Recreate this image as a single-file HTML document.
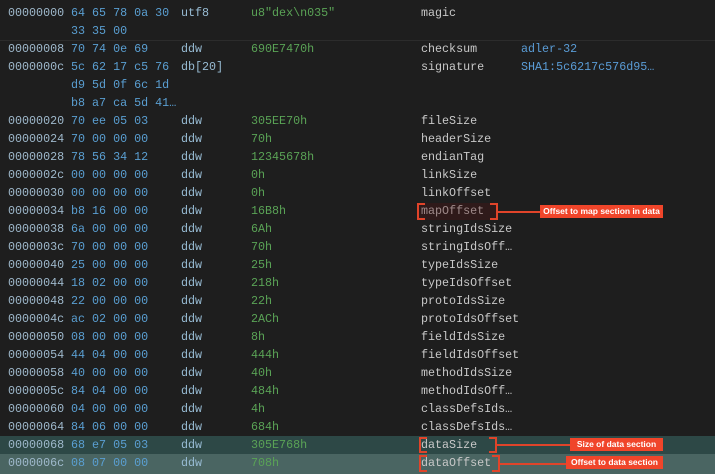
<!DOCTYPE html>
<html><head><style>
body{margin:0;background:#1e1e1e;width:715px;height:474px;overflow:hidden;position:relative;font-family:"Liberation Mono",monospace;font-size:11.7px}
.r{position:absolute;left:0;width:715px;height:18px;line-height:18px;white-space:pre}
.r span{position:absolute;top:0}
.o{left:8px;color:#9fb9cc}
.h{left:71px;color:#5a9fd2}
.t{left:181px;color:#98bcd4}
.v{left:251px;color:#5aa356}
.n{left:421px;color:#c8c8c8}
.c{left:521px;color:#5a9cd6}
.sep{position:absolute;left:0;top:40px;width:715px;height:1px;background:#2c2c2c}
.box{position:absolute;border:2px solid #e0442a;border-top:none;border-bottom:none}
.box:before,.box:after{content:"";position:absolute;left:0;right:0;height:2px;background:linear-gradient(90deg,#e0442a 6px,transparent 6px,transparent calc(100% - 6px),#e0442a calc(100% - 6px))}
.box:before{top:0}.box:after{bottom:0}
.ln{position:absolute;height:2px;background:#e0442a}
.lb{position:absolute;background:#f0452a;color:#fff;font-family:"Liberation Sans",sans-serif;font-weight:bold;font-size:8.5px;text-align:center;line-height:13px;height:13px}
</style></head><body>
<div class="r" style="top:4px"><span class="o">00000000</span><span class="h">64 65 78 0a 30</span><span class="t">utf8</span><span class="v">u8"dex\n035"</span><span class="n">magic</span></div>
<div class="r" style="top:22px"><span class="h">33 35 00</span></div>
<div class="sep"></div>
<div class="r" style="top:40px"><span class="o">00000008</span><span class="h">70 74 0e 69</span><span class="t">ddw</span><span class="v">690E7470h</span><span class="n">checksum</span><span class="c">adler-32</span></div>
<div class="r" style="top:58px"><span class="o">0000000c</span><span class="h">5c 62 17 c5 76</span><span class="t">db[20]</span><span class="n">signature</span><span class="c">SHA1:5c6217c576d95…</span></div>
<div class="r" style="top:76px"><span class="h">d9 5d 0f 6c 1d</span></div>
<div class="r" style="top:94px"><span class="h">b8 a7 ca 5d 41…</span></div>
<div class="r" style="top:112px"><span class="o">00000020</span><span class="h">70 ee 05 03</span><span class="t">ddw</span><span class="v">305EE70h</span><span class="n">fileSize</span></div>
<div class="r" style="top:130px"><span class="o">00000024</span><span class="h">70 00 00 00</span><span class="t">ddw</span><span class="v">70h</span><span class="n">headerSize</span></div>
<div class="r" style="top:148px"><span class="o">00000028</span><span class="h">78 56 34 12</span><span class="t">ddw</span><span class="v">12345678h</span><span class="n">endianTag</span></div>
<div class="r" style="top:166px"><span class="o">0000002c</span><span class="h">00 00 00 00</span><span class="t">ddw</span><span class="v">0h</span><span class="n">linkSize</span></div>
<div class="r" style="top:184px"><span class="o">00000030</span><span class="h">00 00 00 00</span><span class="t">ddw</span><span class="v">0h</span><span class="n">linkOffset</span></div>
<div class="r" style="top:202px"><span class="o">00000034</span><span class="h">b8 16 00 00</span><span class="t">ddw</span><span class="v">16B8h</span><span class="n">mapOffset</span></div>
<div class="r" style="top:220px"><span class="o">00000038</span><span class="h">6a 00 00 00</span><span class="t">ddw</span><span class="v">6Ah</span><span class="n">stringIdsSize</span></div>
<div class="r" style="top:238px"><span class="o">0000003c</span><span class="h">70 00 00 00</span><span class="t">ddw</span><span class="v">70h</span><span class="n">stringIdsOff…</span></div>
<div class="r" style="top:256px"><span class="o">00000040</span><span class="h">25 00 00 00</span><span class="t">ddw</span><span class="v">25h</span><span class="n">typeIdsSize</span></div>
<div class="r" style="top:274px"><span class="o">00000044</span><span class="h">18 02 00 00</span><span class="t">ddw</span><span class="v">218h</span><span class="n">typeIdsOffset</span></div>
<div class="r" style="top:292px"><span class="o">00000048</span><span class="h">22 00 00 00</span><span class="t">ddw</span><span class="v">22h</span><span class="n">protoIdsSize</span></div>
<div class="r" style="top:310px"><span class="o">0000004c</span><span class="h">ac 02 00 00</span><span class="t">ddw</span><span class="v">2ACh</span><span class="n">protoIdsOffset</span></div>
<div class="r" style="top:328px"><span class="o">00000050</span><span class="h">08 00 00 00</span><span class="t">ddw</span><span class="v">8h</span><span class="n">fieldIdsSize</span></div>
<div class="r" style="top:346px"><span class="o">00000054</span><span class="h">44 04 00 00</span><span class="t">ddw</span><span class="v">444h</span><span class="n">fieldIdsOffset</span></div>
<div class="r" style="top:364px"><span class="o">00000058</span><span class="h">40 00 00 00</span><span class="t">ddw</span><span class="v">40h</span><span class="n">methodIdsSize</span></div>
<div class="r" style="top:382px"><span class="o">0000005c</span><span class="h">84 04 00 00</span><span class="t">ddw</span><span class="v">484h</span><span class="n">methodIdsOff…</span></div>
<div class="r" style="top:400px"><span class="o">00000060</span><span class="h">04 00 00 00</span><span class="t">ddw</span><span class="v">4h</span><span class="n">classDefsIds…</span></div>
<div class="r" style="top:418px"><span class="o">00000064</span><span class="h">84 06 00 00</span><span class="t">ddw</span><span class="v">684h</span><span class="n">classDefsIds…</span></div>
<div class="r" style="top:436px;background:#2d4846"><span class="o">00000068</span><span class="h">68 e7 05 03</span><span class="t">ddw</span><span class="v">305E768h</span><span class="n">dataSize</span></div>
<div class="r" style="top:454px;height:20px;background:#4a6562"><span class="o">0000006c</span><span class="h">08 07 00 00</span><span class="t">ddw</span><span class="v">708h</span><span class="n">dataOffset</span></div>

<div class="box" style="left:417px;top:203px;width:77px;height:17px;background:rgba(80,20,20,.35)"></div>
<div class="ln" style="left:497px;top:211px;width:43px"></div>
<div class="lb" style="left:540px;top:205px;width:123px">Offset to map section in data</div>

<div class="box" style="left:419px;top:437px;width:74px;height:16px"></div>
<div class="ln" style="left:496px;top:444px;width:74px"></div>
<div class="lb" style="left:570px;top:438px;width:93px">Size of data section</div>

<div class="box" style="left:419px;top:455px;width:77px;height:17px"></div>
<div class="ln" style="left:499px;top:463px;width:67px"></div>
<div class="lb" style="left:566px;top:456px;width:97px">Offset to data section</div>
</body></html>
